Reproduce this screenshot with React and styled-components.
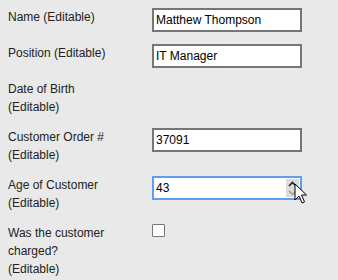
import React from "react";
import styled, { createGlobalStyle } from "styled-components";

const Global = createGlobalStyle`
  html, body { margin: 0; padding: 0; background: #e9e9e9; }
  body { padding: 8px; font-family: Arial, "Liberation Sans", sans-serif; }
  * { box-sizing: border-box; }
`;

const Form = styled.div`
  display: grid;
  grid-template-columns: 101px 150px;
  column-gap: 43px;
  row-gap: 12px;
  align-items: start;
`;

const Label = styled.div`
  font-size: 12px;
  line-height: 18px;
  color: #222;
`;

const Field = styled.div`
  position: relative;
  width: 150px;
  height: ${(p) => (p.$empty ? "36px" : "24px")};
`;

const Input = styled.input`
  display: block;
  width: 150px;
  height: 24px;
  margin: 0;
  padding: 0 2px;
  border: 2px solid ${(p) => (p.$focused ? "#5e9ef0" : "#767676")};
  background: #fff;
  font-family: Arial, "Liberation Sans", sans-serif;
  font-size: 12px;
  color: #000;
  outline: none;
`;

const Spinner = styled.div`
  position: absolute;
  right: 3px;
  top: 3px;
  width: 13px;
  height: 18px;
  background: #dcdcdc;
  display: flex;
  flex-direction: column;
  align-items: center;
  justify-content: space-around;
`;

const Cursor = styled.svg`
  position: absolute;
  left: 142px;
  top: 7px;
`;

const Check = styled.div`
  width: 13px;
  height: 13px;
  border: 1px solid #767676;
  border-radius: 1px;
  background: #fff;
`;

export default function App() {
  return (
    <>
      <Global />
      <Form>
        <Label>Name (Editable)</Label>
        <Field>
          <Input defaultValue="Matthew Thompson" />
        </Field>

        <Label>Position (Editable)</Label>
        <Field>
          <Input defaultValue="IT Manager" />
        </Field>

        <Label>Date of Birth (Editable)</Label>
        <Field $empty />

        <Label>Customer Order # (Editable)</Label>
        <Field>
          <Input defaultValue="37091" />
        </Field>

        <Label>Age of Customer (Editable)</Label>
        <Field>
          <Input defaultValue="43" $focused />
          <Spinner>
            <svg width="9" height="6" viewBox="0 0 9 6">
              <path d="M1 5 L4.5 1.5 L8 5" fill="none" stroke="#222" strokeWidth="1.6" />
            </svg>
            <svg width="9" height="6" viewBox="0 0 9 6">
              <path d="M1 1 L4.5 4.5 L8 1" fill="none" stroke="#a0a0a0" strokeWidth="1.6" />
            </svg>
          </Spinner>
          <Cursor width="14" height="22" viewBox="0 0 14 22">
            <path
              d="M1 1 L1 17 L5 13 L8 20 L10.5 19 L7.5 12 L12.5 12 Z"
              fill="#fff"
              stroke="#000"
              strokeWidth="1"
              strokeLinejoin="round"
            />
          </Cursor>
        </Field>

        <Label>Was the customer charged? (Editable)</Label>
        <Field>
          <Check />
        </Field>
      </Form>
    </>
  );
}
